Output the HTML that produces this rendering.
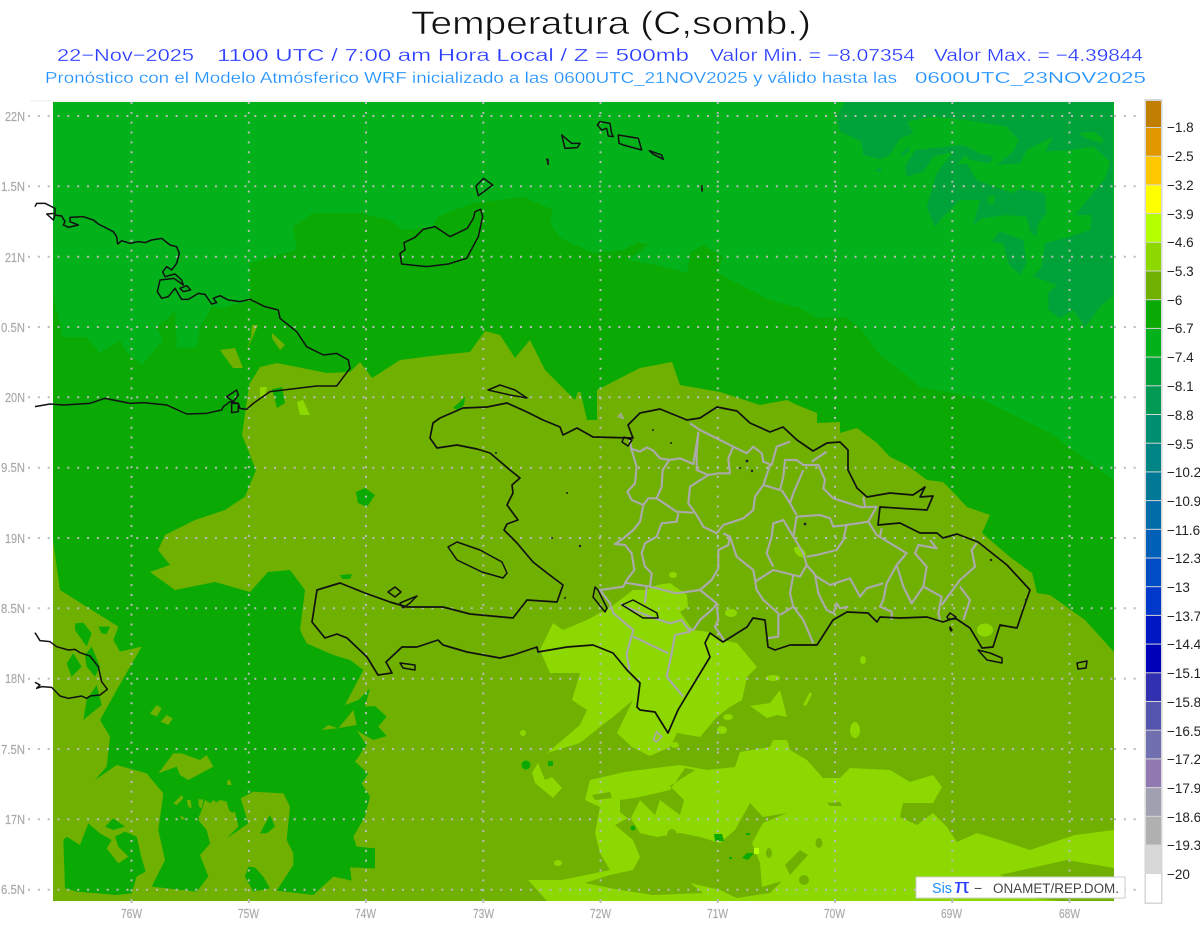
<!DOCTYPE html>
<html><head><meta charset="utf-8"><title>Temperatura (C,somb.)</title>
<style>html,body{margin:0;padding:0;background:#fff}svg{display:block}
text{font-family:"Liberation Sans",sans-serif}</style></head><body>
<svg width="1200" height="927" viewBox="0 0 1200 927" xmlns="http://www.w3.org/2000/svg">
<rect width="1200" height="927" fill="#fff"/>
<text x="411" y="34" font-size="32" textLength="400" lengthAdjust="spacingAndGlyphs" fill="#111" stroke="#fff" stroke-width=".6">Temperatura (C,somb.)</text>
<g fill="#2a3cff" font-size="17.5" stroke="#fff" stroke-width=".25">
<text x="57" y="61" textLength="137" lengthAdjust="spacingAndGlyphs">22−Nov−2025</text>
<text x="217" y="61" textLength="472" lengthAdjust="spacingAndGlyphs">1100 UTC / 7:00 am Hora Local / Z = 500mb</text>
<text x="710" y="61" textLength="205" lengthAdjust="spacingAndGlyphs">Valor Min. = −8.07354</text>
<text x="934" y="61" textLength="209" lengthAdjust="spacingAndGlyphs">Valor Max. = −4.39844</text>
</g>
<g fill="#1e90ff" font-size="15.5" stroke="#fff" stroke-width=".2">
<text x="45" y="83" textLength="852" lengthAdjust="spacingAndGlyphs">Pronóstico con el Modelo Atmósferico WRF inicializado a las 0600UTC_21NOV2025 y válido hasta las</text>
<text x="915" y="83" textLength="231" lengthAdjust="spacingAndGlyphs">0600UTC_23NOV2025</text>
</g>
<rect x="30" y="100.5" width="1090" height="1" fill="#eee"/>
<svg x="53" y="102" width="1061" height="799" viewBox="53 102 1061 799">
<rect x="53" y="102" width="1061" height="799" fill="#03b11a"/>
<!-- NE darker -->
<g transform="translate(800,100) scale(.33333)" fill="#00a33a">
<path d="M135 6H940V585L900 620 855 682 820 630 780 655 745 630 745 580 770 555 700 530 725 500 735 430 810 410 870 390 875 345 825 345 915 235 930 185 880 140 810 150 735 155 760 110 680 150 660 190 590 195 640 155 655 120 620 80 500 60 400 50 320 65 340 100 300 115 270 165 240 178 190 165 185 125 120 95 110 50Z"/>
<path d="M315 200L345 150 490 135 540 160 580 170 570 190 510 180 495 165 470 195 500 190 530 240 640 280 660 265 735 280 740 340 715 370 710 410 690 395 680 350 620 345 545 355 520 375 540 300 480 300 430 350 405 380 380 320 410 220 460 155 400 170 370 215 320 230Z"/>
<path d="M575 425L600 395 670 420 680 490 660 525 625 490 610 430Z"/>
<path d="M300 165L325 140 330 150 305 170ZM225 210L245 202 240 218Z"/>
</g>
<g transform="translate(800,100) scale(.33333)" fill="#03b11a"><path d="M835 100L880 95 910 115 905 130 860 115Z"/><path d="M565 290L585 285 580 315 565 310Z"/></g>
<!-- deep -->
<path fill="#0aa904" d="M53 901V295L63 337 87 337 100 353 120 340 127 353 142 365 163 340 157 327 175 312 177 348 197 347 200 327 212 307 223 308 250 300 250 263 297 250 293 227 313 213 360 213 390 220 403 230 433 227 437 217 473 203 523 197 553 210 550 223 560 238 593 253 623 250 638 242 648 245 627 260 657 265 687 273 690 253 703 245 723 257 717 273 770 300 800 308 817 318 845 317 860 328 880 355 900 370 920 387 937 390 983 400 1050 433 1114 480V901Z"/>
<!-- olive -->
<path fill="#70b000" d="M53 901V540L250 383 260 367 277 363 327 373 350 372 360 362 372 378 400 360 440 355 470 352 485 331 500 335 515 358 530 340 545 370 560 385 575 400 578 392 597 390 640 368 672 362 680 385 720 392 760 405 787 400 797 405 817 413 817 423 840 422 840 433 857 428 877 443 890 457 907 465 927 480 943 482 953 492 967 507 990 515 982 533 1010 557 1032 573 1037 593 1050 595 1085 620 1114 652V901Z"/>
<g fill="#0aa904">
<path d="M580 390L597 390 597 420 587 420Z"/><path d="M453 408L465 397 464 405 458 410Z"/>
<path d="M356 492L365 488 375 495 367 507 358 503Z"/>
<path d="M340 575L352 574 350 579 342 579Z"/>
</g>
<g fill="#70b000">
<path d="M220 350L235 348 243 368 233 368ZM252 325L258 325 247 350 251 337ZM272 333L285 345 280 350 272 338Z"/>
</g>
<g fill="#8cd800">
<path d="M260 387L267 387 265 397 260 397ZM297 402L303 400 310 415 300 415Z"/>
</g>
<path fill="#0aa904" d="M272 389L282 387 285 403 277 408Z"/>
<!-- SW deep overlay -->
<g transform="translate(0,610) scale(.33333)" fill="#0aa904">
<path d="M159 -690H750L726 -525 768 -420 735 -340 675 -300 585 -270 495 -225 474 -180 510 -135 450 -114 525 -60 645 -84 750 -54 804 -114 870 -120 915 -60 900 60 920 100 1000 135 1050 150 1090 180 1035 285 1075 270 1110 235 1095 290 1125 288 1160 320 1135 350 1160 378 1120 390 1070 362 1100 405 1065 455 1105 490 1085 520 1110 560 1095 620 1060 680 1070 710 1125 715 1125 775 1050 772 1055 812 1000 800 940 855 830 842 880 765 880 730 860 690 870 590 850 550 760 545 722 565 745 640 680 685 700 610 640 570 595 620 620 660 640 690 600 735 625 800 590 845 455 830 495 750 475 660 490 550 440 490 350 465 285 510 320 470 330 380 300 330 350 240 425 110 360 125 340 90 355 50 285 6 180 -60 159 -210Z"/>
<path d="M190 690L200 680 240 705 265 640 300 670 335 690 320 715 355 760 385 740 355 710 345 680 375 665 410 680 425 745 437 785 410 800 395 850 350 855 230 845 195 835Z"/>
<path d="M315 650L340 625 375 650 340 660Z"/>
<path d="M745 770L765 772 790 800 810 835 760 845 735 800Z"/>
<path d="M780 670L810 615 825 650 800 670Z"/>
<path d="M225 40L250 38 275 70 260 110 225 60ZM200 160L220 130 245 170 215 200ZM255 135L275 110 300 170 285 200 260 170ZM260 270L290 225 305 285 250 330Z"/>
<path d="M295 50L330 50 320 72 305 70Z"/>
</g>
<g transform="translate(0,610) scale(.33333)" fill="#70b000">
<path d="M450 310L470 285 485 295 470 320ZM482 335L500 315 518 325 505 345Z"/>
<path d="M475 490L520 430 545 430 600 450 620 435 640 470 565 510 540 495 530 470Z"/>
<path d="M680 515L690 508 695 525 682 525ZM520 580L545 555 550 565 530 585ZM560 570L572 570 575 595 565 590ZM595 568L610 568 605 595 597 590Z"/>
<path d="M615 570L640 585 660 570 680 575 690 610 705 605 715 650 680 685 655 675 660 705 630 700 620 660 595 630Z"/>
<path d="M540 615L555 625 545 630Z"/>
<path d="M1015 355L1060 300 1070 345 1010 355 965 360 985 345Z"/>
</g>
<!-- light -->
<g fill="#8cd800">
<path d="M540 650L553 623 563 630 587 620 600 613 607 610 633 590 647 590 657 585 670 583 687 595 688 607 680 612 693 630 710 632 723 640 737 643 757 667 747 677 742 700 730 707 717 717 700 737 677 733 670 747 650 756 632 747 617 733 633 700 613 717 600 727 580 743 547 753 580 725 587 710 572 700 580 673 550 673Z"/>
<path d="M773 740L787 740 790 750 807 760 823 778 840 778 850 768 890 770 910 782 933 775 942 787 933 803 903 803 900 817 917 825 933 813 947 827 957 842 977 833 1000 840 1030 850 1075 835 1114 830V868L1085 870 1067 860 1013 877 1000 895 1060 901H547L528 880 562 880 610 870 600 853 595 833 600 807 585 800 590 780 625 772 655 768 680 765 707 770 735 767 740 752 770 747Z"/>
<ellipse cx="985" cy="630" rx="8" ry="6.5"/><ellipse cx="731" cy="613" rx="6" ry="4"/><ellipse cx="800" cy="552" rx="7" ry="4" transform="rotate(40 800 552)"/><ellipse cx="673" cy="575" rx="4" ry="3"/>
<ellipse cx="773" cy="678" rx="7" ry="3"/><ellipse cx="863" cy="660" rx="3" ry="4"/><ellipse cx="855" cy="730" rx="5" ry="8"/>
<path d="M750 706L770 703 780 690 787 717 777 715 767 718Z"/><path d="M803 705L810 692 812 694 806 706Z"/>
<ellipse cx="523" cy="733" rx="3" ry="3"/><ellipse cx="558" cy="863" rx="4" ry="3"/><ellipse cx="728" cy="717" rx="5" ry="3"/><ellipse cx="722" cy="730" rx="5" ry="4"/><ellipse cx="675" cy="745" rx="4" ry="3"/>
<path d="M532 773L538 763 545 780 552 777 562 788 553 798 535 783Z"/>
<ellipse cx="660" cy="786" rx="8" ry="4" transform="rotate(-25 660 786)"/>
</g>
<!-- olive holes in south -->
<g fill="#70b000">
<path d="M750 803L763 817 787 813 763 823 752 843 760 863 762 887 782 881 770 893 737 898 720 890 690 883 703 893 653 895 620 890 585 883 610 875 633 870 640 857 633 840 615 825 630 817 640 833 657 837 680 833 700 837 720 843 735 830Z"/>
<path d="M620 800L640 797 670 790 685 768 695 770 670 786 684 800 680 815 660 800 655 815 640 800 630 820 620 812Z"/>
<path d="M1000 875L1067 860 1114 868V901H1060Z"/>
<path d="M592 795L610 792 612 798 595 800Z"/><ellipse cx="819" cy="843" rx="3.5" ry="5"/><ellipse cx="769" cy="853" rx="3" ry="5"/>
<path d="M790 875L808 855 800 850 785 865Z"/><ellipse cx="804" cy="880" rx="5" ry="5"/>
<ellipse cx="672" cy="835" rx="5" ry="6"/>
<path d="M827 803L840 802 842 806 830 806Z"/>
</g>
<g fill="#0aa904">
<circle cx="526" cy="765" r="4.5"/><rect x="548" y="761" width="5" height="5"/><path d="M714 834L722 834 724 841 715 841Z"/>
<path d="M742 858L747 853 754 853 748 860Z"/><circle cx="633" cy="828" r="2.5"/><rect x="729" y="857" width="3" height="2"/><rect x="746" y="833" width="4" height="2"/>
</g>
<rect x="754" y="848" width="5" height="6" fill="#b4ff00"/>
<!-- grid -->
<g stroke="#bbb" stroke-width="2" fill="none" stroke-dasharray="2 7.84">
<path d="M28 116H1114M28 186.3H1114M28 256.7H1114M28 327H1114M28 397.3H1114M28 467.7H1114M28 538H1114M28 608.3H1114M28 678.7H1114M28 749H1114M28 819.3H1114M28 889.7H1114"/>
<path d="M131.5 102V901M248.8 102V901M366 102V901M483.3 102V901M600.5 102V901M717.8 102V901M835 102V901M952.3 102V901M1069.5 102V901"/>
</g>
<!-- provinces -->
<g transform="translate(590,390) scale(.33333)" fill="none" stroke="#aaa" stroke-width="6.5" stroke-linejoin="round">
<path d="M118 140L125 180 140 230 135 280 112 305 125 330 160 345 150 395 130 420 100 445 75 462 105 465 125 490 133 540 110 570 100 590 30 600 60 640 70 670 130 720 110 790 118 840"/>
<path d="M120 175L150 185 170 172 190 182 210 205 238 210 270 205 310 222 325 130M300 100L330 120 390 150 430 170 470 190 490 170 515 190 520 215 545 225 560 170 600 155"/>
<path d="M238 210L218 240 215 290 200 325 175 325 160 345"/>
<path d="M325 125L320 190 320 240 355 255 385 250 420 250 415 205 430 170"/>
<path d="M355 255L300 290 295 340 320 375 340 410 380 430 400 405 460 385 490 360 495 320 520 285 540 225"/>
<path d="M200 325L260 365 310 368M265 370L260 395 215 400 200 440 165 460 155 490 165 530 185 550 180 590"/>
<path d="M105 578L180 590 260 610 330 600 365 570 385 535 385 480 415 465 420 440 400 430"/>
<path d="M420 440L440 500 490 540 495 570 500 600 520 630 565 670 565 740 530 745"/>
<path d="M495 575L550 540 610 555 630 560 650 525 640 490 610 440 580 390 550 400 545 440 530 490 550 530"/>
<path d="M610 440L620 380 690 375 720 385 730 410 770 405 760 450 740 480 680 495 650 500"/>
<path d="M520 285L570 300 580 260 585 210 620 210 640 225 685 225 705 270 700 295 730 325 815 352 860 350 835 395 770 405"/>
<path d="M575 300L600 340 620 375M600 340L610 310 640 240M665 215L710 185M820 320L825 350"/>
<path d="M835 395L860 435 950 490 920 525 890 580 880 630 870 650 905 665 905 690M870 440L875 415"/>
<path d="M650 525L680 560 720 585 780 565 810 620 830 595 880 580"/>
<path d="M675 555L685 610 710 660 730 670 740 640 750 655 775 650"/>
<path d="M610 555L600 610 610 650 640 690 670 760M610 650L570 675"/>
<path d="M330 600L380 640 370 655 330 690 310 720 290 715M380 650L385 690 375 710 405 755"/>
<path d="M92 640L105 650 130 660 180 680 240 700 275 690 300 725 255 735 245 790 230 860 280 920M130 740L235 790"/>
<path d="M170 590L165 640"/>
<path d="M920 525L940 590 965 640 1000 590 1010 530 975 490 985 465 1040 475 1020 450"/>
<path d="M1000 590L1055 620 1045 670 1050 690M1160 460L1145 480 1155 530 1110 570 1055 645M1110 590L1140 630 1120 690"/>
<path d="M92 70L100 85 85 80Z" stroke-width="4"/>
<path d="M190 1050L200 1025 215 1040 200 1055Z" stroke-width="5"/>
</g>
<rect x="916" y="877" width="209" height="21" fill="#fff"/>
</svg>
<!-- grid ticks outside map -->
<g stroke="#bbb" stroke-width="2" fill="none" stroke-dasharray="2 7.84">
<path d="M1114 116H1142M1114 186.3H1142M1114 256.7H1142M1114 327H1142M1114 397.3H1142M1114 467.7H1142M1114 538H1142M1114 608.3H1142M1114 678.7H1142M1114 749H1142M1114 819.3H1142M1114 889.7H1142"/>
<path d="M28 116H53M28 186.3H53M28 256.7H53M28 327H53M28 397.3H53M28 467.7H53M28 538H53M28 608.3H53M28 678.7H53M28 749H53M28 819.3H53M28 889.7H53"/>
<path d="M131.5 901V906M248.8 901V906M366 901V906M483.3 901V906M600.5 901V906M717.8 901V906M835 901V906M952.3 901V906M1069.5 901V906"/>
</g>
<!-- coasts -->
<g fill="none" stroke="#111" stroke-width="1.5" stroke-linejoin="round">
<path d="M433 423L440 418 463 408 487 407 507 403 527 412 543 420 560 427 563 435 577 428 593 437 633 438 628 425 640 413 660 409 687 420 700 418 717 407 737 411 750 423 770 432 783 427 797 440 813 451 827 443 840 442 848 450 848 470 857 488 867 497 890 493 913 495 925 487 920 497 933 496 927 510 880 507 878 525 900 523 920 533 937 533 943 538 957 534 978 542 1007 565 1030 590 1023 610 1017 628 1000 625 993 647 982 648 970 628 955 618 943 622 927 617 900 618 880 617 877 622 868 613 847 612 833 620 817 645 790 645 775 650 768 647 765 620 753 618 747 627 723 642 710 633 705 643 710 657 690 690 678 710 668 733 655 712 640 710 637 707 640 683 627 670 613 653 593 645 567 647 538 652 537 647 513 655 500 658 467 652 443 645 438 640 417 647 402 647 386 662 392 673 378 675 367 657 347 638 337 634 325 638 312 622 317 590 340 583 365 593 390 602 407 607 443 607 470 614 513 618 527 600 557 602 563 585 547 573 533 562 517 543 504 530 507 524 518 520 507 505 513 493 512 485 520 478 510 470 490 453 477 449 457 445 437 448 430 438Z" stroke-width="1.7"/>
<path d="M448 547L457 542 480 550 502 562 507 573 503 578 482 572 457 560Z"/>
<path d="M488 390L500 385 515 390 527 398 510 395Z"/>
<path d="M388 592L395 587 401 592 395 597Z"/>
<path d="M400 663L415 665 415 670 403 668Z"/>
<path d="M400 603L417 596 410 603 403 608Z"/>
<path d="M978 650L990 653 1002 658 1002 663 987 660Z"/>
<path d="M1077 663L1087 661 1086 668 1078 669Z"/>
<path d="M622 605L633 600 657 613 658 618 643 618 627 608Z"/>
<path d="M595 587L593 597 605 612 607 608 598 590Z"/>
<path d="M947 617L950 613 956 617 955 619 948 619Z"/><path d="M950 627L952 630 951 631 950 629Z"/>
<path d="M624 437L632 440 628 446 622 442Z"/>
<g transform="translate(390,110) scale(.33333)" stroke-width="4.5">
<path d="M35 462L30 430 45 420 42 398 75 382 100 358 135 350 180 380 232 355 250 325 255 305 272 298 278 320 265 380 230 445 175 462 110 470Z"/>
<path d="M258 228L281 205 308 225 265 257Z"/>
<path d="M515 75L545 100 570 100 562 113 525 115Z"/>
<path d="M622 45L630 35 660 40 665 70 670 80 655 78 650 55 635 60Z"/>
<path d="M685 75L745 85 755 120 700 105 687 100Z"/>
<path d="M778 122L815 135 820 148 790 133Z"/>
<path d="M470 145L475 165M935 225L937 245"/>
</g>
<g transform="translate(20,110) scale(.33333)" stroke-width="4.5">
<path d="M45 290L50 280 75 280 105 295 105 310 80 312 100 330 105 315 125 318 135 335 130 345 145 352 175 345 150 335 150 322 190 320 220 330 235 342 280 365 290 380 293 402 305 392 330 400 355 395 375 398 395 390 425 385 450 405 470 410 478 430 470 460 455 480 440 470 428 485 435 500 465 492 485 510 490 525 462 505 420 510 412 545 425 565 445 560 465 535 485 568 505 568 535 550 555 553 575 582 590 578 580 565 600 557 625 570 660 575 690 568 735 590 775 600 780 625 830 665 860 710 910 735 950 730 985 750 990 775 950 828 890 828 750 845 700 880 680 898 660 895 655 880 630 875 610 890 605 900 560 910 500 912 440 885 370 878 330 880 255 865 210 880 130 885 90 882 45 890"/>
<path d="M635 880L655 880 655 905 635 908ZM620 860L650 840 655 855 640 875ZM480 535L500 527 512 540 490 545Z"/>
</g>
<g transform="translate(0,610) scale(.33333)" stroke-width="4.5">
<path d="M105 68L120 92 150 95 170 110 205 120 225 118 240 128 270 138 295 170 305 215 322 238 300 255 270 258 260 265 245 258 205 265 180 258 155 232 125 230 110 235 120 225 105 217"/>
</g>
</g>
<g fill="#222">
<rect x="547" y="159" width="2" height="5"/><rect x="701" y="185" width="1.5" height="6"/>
<circle cx="653" cy="430" r="1"/><circle cx="671" cy="443" r="1"/><circle cx="747" cy="461" r="1.4"/><circle cx="740" cy="468" r="1"/><circle cx="752" cy="471" r="1.2"/><circle cx="805" cy="524" r="1.4"/><circle cx="991" cy="560" r="1.2"/><circle cx="1026" cy="600" r="1.2"/><circle cx="565" cy="598" r="1"/><circle cx="580" cy="546" r="1.2"/><circle cx="567" cy="493" r="1"/><circle cx="496" cy="453" r="1"/><circle cx="552" cy="538" r="1"/>
</g>
<!-- axis labels -->
<g fill="#aaa" font-size="13" text-anchor="end" stroke="#aaa" stroke-width=".2">
<text x="25" y="121" textLength="20" lengthAdjust="spacingAndGlyphs">22N</text><text x="25" y="191" textLength="24" lengthAdjust="spacingAndGlyphs">1.5N</text><text x="25" y="262" textLength="20" lengthAdjust="spacingAndGlyphs">21N</text><text x="25" y="332" textLength="24" lengthAdjust="spacingAndGlyphs">0.5N</text><text x="25" y="402" textLength="20" lengthAdjust="spacingAndGlyphs">20N</text><text x="25" y="472" textLength="24" lengthAdjust="spacingAndGlyphs">9.5N</text><text x="25" y="543" textLength="20" lengthAdjust="spacingAndGlyphs">19N</text><text x="25" y="613" textLength="24" lengthAdjust="spacingAndGlyphs">8.5N</text><text x="25" y="683" textLength="20" lengthAdjust="spacingAndGlyphs">18N</text><text x="25" y="754" textLength="24" lengthAdjust="spacingAndGlyphs">7.5N</text><text x="25" y="824" textLength="20" lengthAdjust="spacingAndGlyphs">17N</text><text x="25" y="894" textLength="24" lengthAdjust="spacingAndGlyphs">6.5N</text>
</g>
<g fill="#aaa" font-size="13" stroke="#aaa" stroke-width=".2">
<text x="121" y="918" textLength="21" lengthAdjust="spacingAndGlyphs">76W</text><text x="238" y="918" textLength="21" lengthAdjust="spacingAndGlyphs">75W</text><text x="355" y="918" textLength="21" lengthAdjust="spacingAndGlyphs">74W</text><text x="473" y="918" textLength="21" lengthAdjust="spacingAndGlyphs">73W</text><text x="590" y="918" textLength="21" lengthAdjust="spacingAndGlyphs">72W</text><text x="707" y="918" textLength="21" lengthAdjust="spacingAndGlyphs">71W</text><text x="824" y="918" textLength="21" lengthAdjust="spacingAndGlyphs">70W</text><text x="941" y="918" textLength="21" lengthAdjust="spacingAndGlyphs">69W</text><text x="1059" y="918" textLength="21" lengthAdjust="spacingAndGlyphs">68W</text>
</g>
<!-- legend -->
<rect x="1144.5" y="99" width="18" height="805" fill="#d6d6d6"/>
<g>
<rect x="1146" y="101" width="15" height="26" fill="#c07f00"/>
<rect x="1146" y="128" width="15" height="27.7" fill="#e09700"/>
<rect x="1146" y="156.7" width="15" height="27.7" fill="#ffc800"/>
<rect x="1146" y="185.4" width="15" height="27.7" fill="#ffff00"/>
<rect x="1146" y="214.1" width="15" height="27.7" fill="#b4ff00"/>
<rect x="1146" y="242.8" width="15" height="27.7" fill="#8cd800"/>
<rect x="1146" y="271.5" width="15" height="27.7" fill="#70b000"/>
<rect x="1146" y="300.2" width="15" height="27.7" fill="#0aa904"/>
<rect x="1146" y="328.9" width="15" height="27.7" fill="#03b11a"/>
<rect x="1146" y="357.6" width="15" height="27.7" fill="#00a33a"/>
<rect x="1146" y="386.3" width="15" height="27.7" fill="#009a55"/>
<rect x="1146" y="415" width="15" height="27.7" fill="#008f70"/>
<rect x="1146" y="443.7" width="15" height="27.7" fill="#008484"/>
<rect x="1146" y="472.4" width="15" height="27.7" fill="#007896"/>
<rect x="1146" y="501.1" width="15" height="27.7" fill="#006ca8"/>
<rect x="1146" y="529.8" width="15" height="27.7" fill="#0060b8"/>
<rect x="1146" y="558.5" width="15" height="27.7" fill="#004cc4"/>
<rect x="1146" y="587.2" width="15" height="27.7" fill="#0038cc"/>
<rect x="1146" y="615.9" width="15" height="27.7" fill="#0018c4"/>
<rect x="1146" y="644.6" width="15" height="27.7" fill="#0000b8"/>
<rect x="1146" y="673.3" width="15" height="27.7" fill="#3030b0"/>
<rect x="1146" y="702" width="15" height="27.7" fill="#5555b0"/>
<rect x="1146" y="730.7" width="15" height="27.7" fill="#7070b0"/>
<rect x="1146" y="759.4" width="15" height="27.7" fill="#9078b0"/>
<rect x="1146" y="788.1" width="15" height="27.7" fill="#a0a0b0"/>
<rect x="1146" y="816.8" width="15" height="27.7" fill="#b0b0b0"/>
<rect x="1146" y="845.5" width="15" height="28" fill="#d8d8d8"/>
<rect x="1146" y="874" width="15" height="28.5" fill="#fff"/>
</g>
<g fill="#222" font-size="13.5">
<text x="1167" y="132">−1.8</text><text x="1167" y="161">−2.5</text><text x="1167" y="190">−3.2</text><text x="1167" y="219">−3.9</text><text x="1167" y="247">−4.6</text><text x="1167" y="276">−5.3</text><text x="1167" y="305">−6</text><text x="1167" y="333">−6.7</text><text x="1167" y="362">−7.4</text><text x="1167" y="391">−8.1</text><text x="1167" y="420">−8.8</text><text x="1167" y="449">−9.5</text><text x="1167" y="477">−10.2</text><text x="1167" y="506">−10.9</text><text x="1167" y="535">−11.6</text><text x="1167" y="563">−12.3</text><text x="1167" y="592">−13</text><text x="1167" y="621">−13.7</text><text x="1167" y="649">−14.4</text><text x="1167" y="678">−15.1</text><text x="1167" y="707">−15.8</text><text x="1167" y="736">−16.5</text><text x="1167" y="764">−17.2</text><text x="1167" y="793">−17.9</text><text x="1167" y="822">−18.6</text><text x="1167" y="850">−19.3</text><text x="1167" y="879">−20</text>
</g>
<!-- logo box -->
<rect x="916" y="877" width="209" height="21" fill="#fff" stroke="#ccc" stroke-width="1"/>
<text x="932" y="893" font-size="14.5" fill="#1e90ff" textLength="20" lengthAdjust="spacingAndGlyphs">Sis</text>
<text x="954" y="893" font-size="20" fill="#2a3cff" textLength="16" lengthAdjust="spacingAndGlyphs">π</text>
<text x="974" y="893" font-size="14" fill="#444">−</text>
<text x="993" y="893" font-size="13.5" fill="#444" textLength="126" lengthAdjust="spacingAndGlyphs">ONAMET/REP.DOM.</text>
</svg>
</body></html>
